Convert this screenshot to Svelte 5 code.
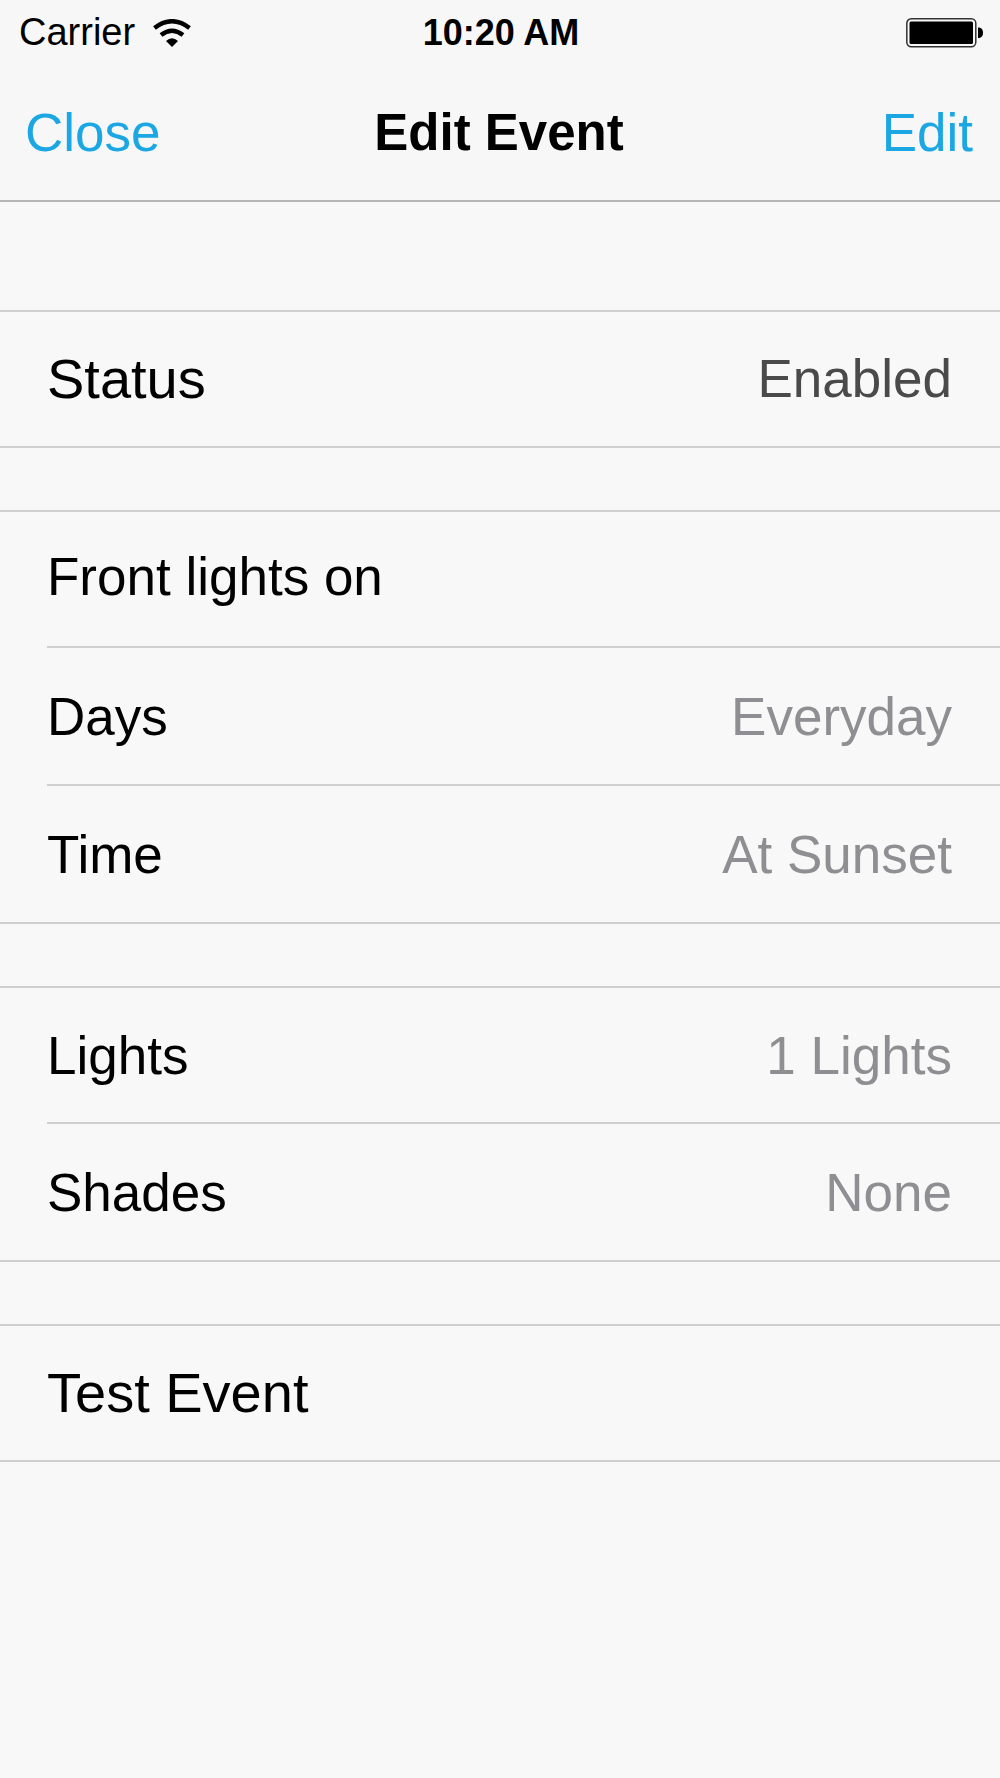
<script lang="ts">
	type Row = { label: string; value: string };

	let title = $state('Front lights on');

	const schedule: Row[] = [
		{ label: 'Days', value: 'Everyday' },
		{ label: 'Time', value: 'At Sunset' }
	];

	const devices: Row[] = [
		{ label: 'Lights', value: '1 Lights' },
		{ label: 'Shades', value: 'None' }
	];
</script>

{#snippet item(row: Row)}
	<li>
		<button type="button" class="row">
			<span>{row.label}</span>
			<span class="value">{row.value}</span>
		</button>
	</li>
{/snippet}

<div class="screen">
	<header>
		<div class="status-bar">
			<div class="carrier">
				<span>Carrier</span>
				<svg class="wifi" viewBox="0 0 38 28" aria-hidden="true">
					<path d="M1.500 9 Q19 -4.500 36.500 9" />
					<path d="M8 16 Q19 7.500 30 16" />
					<path class="dot" d="M13 22 Q19 16.500 25 22 L19 28 Z" />
				</svg>
			</div>
			<span class="clock">10:20 AM</span>
			<svg class="battery" viewBox="0 0 77 30" aria-hidden="true">
				<rect class="case" x="0.800" y="0.800" width="69" height="28" rx="4.500" />
				<rect x="3.500" y="3.500" width="63.500" height="22.500" rx="1.500" />
				<path d="M72 9.500 h1.500 q3.500 1 3.500 5.300 t-3.500 5.300 h-1.500 Z" />
			</svg>
		</div>
		<nav>
			<button type="button" class="action">Close</button>
			<h1>Edit Event</h1>
			<button type="button" class="action end">Edit</button>
		</nav>
	</header>

	<main>
		<ul class="group">
			<li>
				<button type="button" class="row large">
					<span>Status</span>
					<span class="value enabled">Enabled</span>
				</button>
			</li>
		</ul>

		<ul class="group">
			<li>
				<input class="row" type="text" aria-label="Event name" bind:value={title} />
			</li>
			{#each schedule as row}
				{@render item(row)}
			{/each}
		</ul>

		<ul class="group">
			{#each devices as row}
				{@render item(row)}
			{/each}
		</ul>

		<ul class="group">
			<li>
				<button type="button" class="row large">Test Event</button>
			</li>
		</ul>
	</main>
</div>

<style>
	:global(body) {
		margin: 0;
		background: #f8f8f8;
	}

	.screen {
		min-height: 100vh;
		background: #f8f8f8;
		color: #000;
		font-family: 'Liberation Sans', Arial, sans-serif;
	}

	header {
		background: #f7f7f7;
		border-bottom: 2px solid #b6b6b7;
	}

	.status-bar,
	nav {
		display: grid;
		grid-template-columns: 1fr auto 1fr;
		align-items: center;
	}

	.status-bar {
		box-sizing: border-box;
		height: 64px;
		padding: 1px 17px 0 19px;
	}

	.carrier {
		display: flex;
		align-items: center;
		gap: 18px;
		font-size: 38px;
	}

	.wifi {
		width: 38px;
		height: 28px;
		fill: none;
		stroke: #000;
		stroke-width: 4.5;
	}

	.wifi .dot {
		fill: #000;
		stroke: none;
	}

	.clock {
		font-size: 36px;
		font-weight: 700;
	}

	.battery {
		width: 77px;
		height: 30px;
		justify-self: end;
	}

	.battery .case {
		fill: none;
		stroke: #333;
		stroke-width: 1.5;
	}

	nav {
		height: 136px;
		padding: 0 27px 0 25px;
	}

	h1 {
		margin: 0;
		font-size: 51px;
		font-weight: 700;
	}

	button,
	input {
		margin: 0;
		padding: 0;
		border: 0;
		background: none;
		color: inherit;
		font-family: inherit;
	}

	button {
		cursor: pointer;
	}

	.action {
		justify-self: start;
		font-size: 53px;
		color: #1ba7e3;
	}

	.action.end {
		justify-self: end;
	}

	main {
		display: flex;
		flex-direction: column;
		gap: 62px;
		padding-top: 108px;
	}

	.group {
		margin: 0;
		padding: 0;
		list-style: none;
		border-top: 2px solid #cfcfd0;
		border-bottom: 2px solid #cfcfd0;
	}

	li {
		padding-left: 47px;
	}

	.row {
		display: flex;
		align-items: center;
		justify-content: space-between;
		box-sizing: border-box;
		width: 100%;
		height: 134px;
		padding: 0 48px 0 0;
		font-size: 53px;
		text-align: left;
	}

	li + li .row {
		height: 138px;
		border-top: 2px solid #cfcfd0;
	}

	input.row {
		padding-bottom: 6px;
		outline: none;
	}

	.row.large {
		padding-bottom: 2px;
		font-size: 56px;
	}

	.value {
		color: #8e8e93;
		font-size: 53px;
	}

	.value.enabled {
		color: #4a4a4a;
	}
</style>
